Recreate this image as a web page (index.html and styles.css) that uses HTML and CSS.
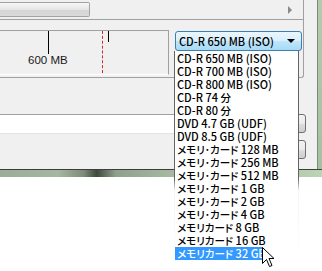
FILE: index.html
```html
<!DOCTYPE html>
<html lang="ja">
  <head>
    <meta charset="utf-8" />
    <title>Disc size</title>
    <link rel="stylesheet" href="styles.css">
  </head>
  <body>
    <div class="window">
      <div class="main">
        <div class="client">
          <div class="box">
            <div class="hscroll">
              <div class="thumb"></div>
              <span class="arrow"></span>
            </div>
            <div class="toolrow">
              <div class="disc">
                <span class="tick t1"></span>
                <span class="label">600 MB</span>
                <span class="limit"></span>
                <span class="tick t2"></span>
              </div>
              <div class="combo">
                <span class="combo-text">CD-R 650 MB (ISO)</span>
                <span class="caret"></span>
              </div>
            </div>
          </div>
          <div class="lower">
            <div class="field-row">
              <div class="field"></div>
              <div class="btn"></div>
            </div>
            <div class="btn-row">
              <div class="btn"></div>
            </div>
          </div>
        </div>
        <div class="frame-right"></div>
      </div>
      <div class="frame-bottom"></div>
    </div>

    <ul class="list">
      <li>CD-R 650 MB (ISO)</li>
      <li>CD-R 700 MB (ISO)</li>
      <li>CD-R 800 MB (ISO)</li>
      <li>CD-R 74 <span class="jp">分</span></li>
      <li>CD-R 80 <span class="jp">分</span></li>
      <li>DVD 4.7 GB (UDF)</li>
      <li>DVD 8.5 GB (UDF)</li>
      <li><span class="jp">メモリ･カード</span> 128 MB</li>
      <li><span class="jp">メモリ･カード</span> 256 MB</li>
      <li><span class="jp">メモリ･カード</span> 512 MB</li>
      <li><span class="jp">メモリ･カード</span> 1 GB</li>
      <li><span class="jp">メモリ･カード</span> 2 GB</li>
      <li><span class="jp">メモリ･カード</span> 4 GB</li>
      <li><span class="jp">メモリカード</span> 8 GB</li>
      <li><span class="jp">メモリカード</span> 16 GB</li>
      <li class="selected"><span class="jp">メモリカード</span> 32 GB</li>
    </ul>

    <svg class="cursor" width="14" height="23" viewBox="0 0 14 23">
      <path d="M1.5 1.5 L1.5 17.5 L5.5 13.5 L8.5 20.5 L11 19.5 L8 12.5 L13 12.5 Z" fill="#fff" stroke="#000" stroke-width="1" stroke-linejoin="round"/>
    </svg>
  </body>
</html>
```

FILE: styles.css
```css
html {
  background: #fff;
}
body {
  margin: 0;
  width: 322px;
  height: 271px;
  overflow: hidden;
  position: relative;
  font-family: "Noto Sans CJK JP", "Noto Sans", sans-serif;
  font-size: 11px;
  font-weight: 500;
}

/* window chrome */
.window {
  width: 322px;
  height: 177px;
  display: flex;
  flex-direction: column;
}
.main {
  display: flex;
  height: 169px;
}
.client {
  width: 317px;
  background: #f0f0f0;
}
.frame-right {
  flex: 1;
  background: linear-gradient(#b4c9ad, #a9bfa2);
  border-left: 1px solid #7c8a7a;
}
.frame-bottom {
  height: 7px;
  border-top: 1px solid #3b3f3b;
  background: linear-gradient(90deg, #9aad98 0%, #a5b6a2 18%, #7c8c78 26%, #3d4a3c 30%, #8fa08b 36%, #a9bba5 55%, #8c9d88 72%, #b2c8ab 90%, #bcd3b4 100%);
}

/* upper box: scrollbar + ruler + combo */
.box {
  width: 303px;
  height: 77px;
  border-right: 1px solid #a0a0a0;
  border-bottom: 1px solid #a0a0a0;
  border-bottom-right-radius: 3px;
}
.hscroll {
  height: 19px;
  border-bottom: 1px solid #a0a0a0;
  display: flex;
  align-items: center;
}
.thumb {
  width: 89px;
  height: 13px;
  border: 1px solid #a3a3a3;
  border-left: none;
  border-radius: 0 2px 2px 0;
  background: linear-gradient(#f6f6f6, #e6e6e6 50%, #d6d6d6 51%, #d9d9d9);
}
.arrow {
  margin-left: auto;
  margin-right: 11px;
  width: 0;
  height: 0;
  border-top: 4px solid transparent;
  border-bottom: 4px solid transparent;
  border-left: 4px solid #8a8a8a;
}
.toolrow {
  display: flex;
  align-items: flex-start;
  margin-top: 10px;
}
.disc {
  position: relative;
  width: 168px;
  height: 43px;
  border-top: 1px solid #a0a0a0;
  border-right: 1px solid #a0a0a0;
  border-bottom: 1px solid #fff;
}
.tick {
  position: absolute;
  top: 0;
  width: 1px;
  background: #000;
}
.t1 {
  left: 48px;
  height: 23px;
}
.t2 {
  left: 108px;
  height: 11px;
}
.limit {
  position: absolute;
  left: 102px;
  top: 0;
  height: 42px;
  border-left: 1px dashed #d42a2a;
}
.label {
  position: absolute;
  left: 28px;
  top: 23px;
  font-family: "Liberation Sans", Arial, sans-serif;
  font-size: 11.5px;
  font-weight: 400;
  color: #1a1a1a;
}
.combo {
  margin-left: 6px;
  margin-top: 1px;
  width: 122px;
  height: 18px;
  border: 1px solid #3c7fb1;
  border-radius: 3px;
  background: linear-gradient(#eaf6fd, #d9f0fc 50%, #bee6fd 51%, #a7d9f5);
  display: flex;
  align-items: center;
  padding-left: 3px;
  box-sizing: content-box;
}
.combo-text {
  flex: 1;
  line-height: 18px;
}
.caret {
  margin-right: 6px;
  width: 0;
  height: 0;
  border-left: 4px solid transparent;
  border-right: 4px solid transparent;
  border-top: 4px solid #000;
}

/* lower area */
.lower {
  padding-top: 36px;
}
.field-row {
  display: flex;
  align-items: flex-start;
}
.field {
  width: 230px;
  height: 18px;
  background: #fff;
  border-top: 1px solid #a0a0a0;
  border-bottom: 1px solid #e3e3e3;
}
.btn {
  width: 70px;
  height: 17px;
  margin-left: auto;
  margin-right: 11px;
  border: 1px solid #707070;
  border-radius: 3px;
  background: linear-gradient(#f2f2f2, #ebebeb 50%, #dddddd 51%, #cfcfcf);
}
.btn-row {
  display: flex;
  margin-top: 6px;
}

/* dropdown list, its lower part fades out over the desktop */
.list {
  position: absolute;
  left: 174px;
  top: 51px;
  width: 123px;
  margin: 0;
  padding: 1px 0 0;
  list-style: none;
  background: #fff;
  border: 1px solid;
  border-top: none;
  border-image: linear-gradient(#646464 0, #646464 128px, #f4f4f4 140px, #fff 100%) 1;
}
.list li {
  height: 13px;
  line-height: 13px;
  padding-left: 2px;
  white-space: nowrap;
  color: #000;
}
.list .jp {
  font-size: 10.5px;
  font-feature-settings: "palt";
}
.list .selected {
  width: 86px;
  background: #3399ff;
  color: #fff;
}

.cursor {
  position: absolute;
  left: 261px;
  top: 246px;
}
```
